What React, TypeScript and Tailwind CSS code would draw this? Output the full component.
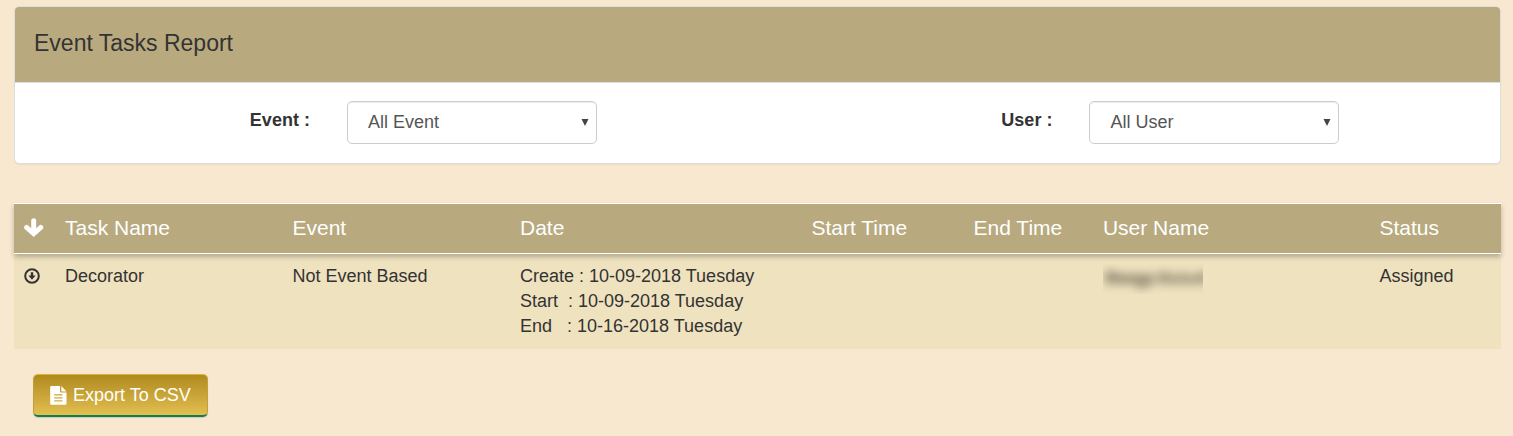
import React, { useId, useState } from "react";

type Task = {
  name: string;
  event: string;
  dates: { label: string; value: string }[];
  startTime: string;
  endTime: string;
  status: string;
};

const tasks: Task[] = [
  {
    name: "Decorator",
    event: "Not Event Based",
    dates: [
      { label: "Create ", value: "10-09-2018 Tuesday" },
      { label: "Start  ", value: "10-09-2018 Tuesday" },
      { label: "End   ", value: "10-16-2018 Tuesday" },
    ],
    startTime: "",
    endTime: "",
    status: "Assigned",
  },
];

function ArrowDownIcon() {
  return (
    <svg viewBox="0 0 20 20" className="block h-5 w-5" fill="none" stroke="currentColor" aria-hidden="true">
      <path d="M9.7 2.8V14" strokeWidth="5" strokeLinecap="round" />
      <path d="M2.6 9.4L9.7 15.8L16.8 9.4" strokeWidth="4.8" strokeLinecap="round" strokeLinejoin="miter" />
    </svg>
  );
}

function DownloadCircleIcon() {
  return (
    <svg viewBox="0 0 16 16" className="block h-4 w-4" aria-hidden="true">
      <circle cx="8" cy="8" r="6.8" fill="none" stroke="currentColor" strokeWidth="2" />
      <path d="M6.8 4.2H9.2V7.6H11.6L8 11.8L4.4 7.6H6.8Z" fill="currentColor" />
    </svg>
  );
}

function FileIcon() {
  return (
    <svg viewBox="0 0 17 19" className="block h-[19px] w-[17px]" aria-hidden="true">
      <path
        fill="currentColor"
        fillRule="evenodd"
        d="M1.3 0H10V5.6Q10 6.6 11 6.6H16.5V17.7Q16.5 18.8 15.4 18.8H1.3Q.2 18.8.2 17.7V1.1Q.2 0 1.3 0ZM4.2 8.2V9.4H12.5V8.2ZM4.2 11.2V12.4H12.5V11.2ZM4.2 14.2V15.4H12.5V14.2Z"
      />
      <path fill="currentColor" d="M11.3 0L16.5 5.4H11.3Z" />
    </svg>
  );
}

function HiddenName() {
  return (
    <span className="flex h-[30px] w-[100px] items-center overflow-hidden text-[#4a4437]">
      <svg viewBox="0 0 100 30" className="block h-[30px] w-[100px] overflow-visible blur-[5px]" fill="currentColor" aria-hidden="true">
        <path opacity=".48" d="M2 7H12L16 10H51V21H45V24H33V20H2Z" />
        <path opacity=".42" d="M54 8H67L70 11H77V8H82V11H94V8H106V20H54Z" />
      </svg>
    </span>
  );
}

function Filter({ label, options }: { label: string; options: string[] }) {
  const id = useId();
  const [value, setValue] = useState(options[0]);
  return (
    <div className="flex items-start">
      <label htmlFor={id} className="w-[44.7%] pt-[7px] pr-[37px] text-right text-lg leading-[25px] font-bold">
        {label} :
      </label>
      <div className="relative w-[250px]">
        <select
          id={id}
          value={value}
          onChange={(e) => setValue(e.target.value)}
          className="h-[43px] w-full appearance-none rounded-[5px] border border-[#ccc] bg-white pr-8 pb-0.5 pl-5 text-lg text-[#555] shadow-[inset_0_1px_1px_rgba(0,0,0,0.075)]"
        >
          {options.map((o) => (
            <option key={o}>{o}</option>
          ))}
        </select>
        <svg viewBox="0 0 8 7" className="pointer-events-none absolute top-[18px] right-2 h-[7px] w-2" aria-hidden="true">
          <path d="M.5 0H7.5L4 7Z" fill="#444" />
        </svg>
      </div>
    </div>
  );
}

export default function App() {
  return (
    <main className="min-h-screen bg-[#f9e8d0] pt-1.5 pr-3 pb-4 pl-3.5 font-['Liberation_Sans',Arial,sans-serif] text-lg leading-[25px] text-[#333]">
      <section className="overflow-hidden rounded-[5px] border border-[#ddd] bg-white shadow-[0_1px_1px_rgba(0,0,0,0.05)]">
        <header className="border-b border-[#ddd] bg-[#b8aa7e] px-[19px] pt-[23px] pb-[26px]">
          <h1 className="text-[23px] leading-[26px]">Event Tasks Report</h1>
        </header>
        <div className="grid grid-cols-2 pt-[18px] pb-[19px]">
          <Filter label="Event" options={["All Event"]} />
          <Filter label="User" options={["All User"]} />
        </div>
      </section>

      <table className="mt-[39px] w-full table-fixed border-separate border-spacing-0 text-left">
        <colgroup>
          <col className="w-[41px]" />
          <col className="w-[15.3%]" />
          <col className="w-[15.3%]" />
          <col className="w-[19.6%]" />
          <col className="w-[10.9%]" />
          <col className="w-[8.7%]" />
          <col className="w-[18.6%]" />
          <col />
        </colgroup>
        <thead className="relative bg-[#b8aa7e] text-[21px] leading-[30px] text-white shadow-[0_3px_5px_rgba(0,0,0,0.25)]">
          <tr className="[&>th]:h-[51px] [&>th]:border-y [&>th]:border-white [&>th]:px-2.5 [&>th]:pb-0.5 [&>th]:align-middle [&>th]:font-normal [&>th]:whitespace-nowrap">
            <th aria-label="Details">
              <ArrowDownIcon />
            </th>
            <th>Task Name</th>
            <th>Event</th>
            <th>Date</th>
            <th>Start Time</th>
            <th>End Time</th>
            <th>User Name</th>
            <th>Status</th>
          </tr>
        </thead>
        <tbody className="bg-[#efe2bf]">
          {tasks.map((t) => (
            <tr key={t.name} className="[&>td]:px-2.5 [&>td]:pt-[10px] [&>td]:pb-[10px] [&>td]:align-top">
              <td>
                <button type="button" aria-label="Show details" className="flex h-6 items-center">
                  <DownloadCircleIcon />
                </button>
              </td>
              <td>{t.name}</td>
              <td>{t.event}</td>
              <td className="whitespace-pre">
                {t.dates.map((d) => (
                  <div key={d.label}>{`${d.label}: ${d.value}`}</div>
                ))}
              </td>
              <td>{t.startTime}</td>
              <td>{t.endTime}</td>
              <td>
                <HiddenName />
              </td>
              <td>{t.status}</td>
            </tr>
          ))}
        </tbody>
      </table>

      <button
        type="button"
        className="mt-[25px] ml-[19px] flex h-[43px] items-center gap-1.5 rounded-[5px] border-x border-t border-b-2 border-x-[#c3a03a] border-t-[#d9b23c] border-b-[#0d8050] bg-linear-to-b from-[#b08a1c] to-[#e2bf50] px-4 text-lg text-white shadow-[0_1px_1px_rgba(0,0,0,0.15)]"
      >
        <FileIcon />
        Export To CSV
      </button>
    </main>
  );
}
